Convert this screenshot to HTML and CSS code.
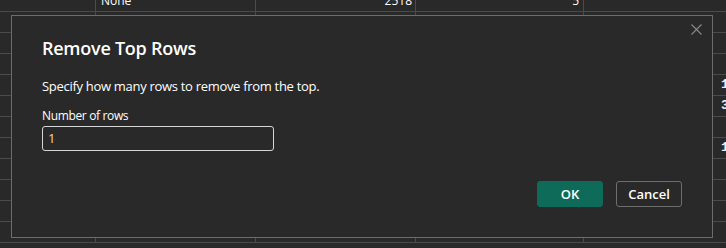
FILE: index.html
```html
<!DOCTYPE html>
<html>
<head>
<meta charset="utf-8">
<link rel="stylesheet" href="styles.css">
</head>
<body>
<div class="sheet">
  <div class="row"><div class="c c1"></div><div class="c c2">None</div><div class="c c3 r">2518</div><div class="c c4 r">5</div><div class="c c5"></div><div class="c c6"></div></div>
  <div class="row"><div class="c c1"></div><div class="c c2"></div><div class="c c3"></div><div class="c c4"></div><div class="c c5"></div><div class="c c6"></div></div>
  <div class="row"><div class="c c1"></div><div class="c c2"></div><div class="c c3"></div><div class="c c4"></div><div class="c c5"></div><div class="c c6"></div></div>
  <div class="row"><div class="c c1"></div><div class="c c2"></div><div class="c c3"></div><div class="c c4"></div><div class="c c5"></div><div class="c c6"></div></div>
  <div class="row"><div class="c c1"></div><div class="c c2"></div><div class="c c3"></div><div class="c c4"></div><div class="c c5"></div><div class="c c6 mono">1</div></div>
  <div class="row"><div class="c c1"></div><div class="c c2"></div><div class="c c3"></div><div class="c c4"></div><div class="c c5"></div><div class="c c6 mono">3</div></div>
  <div class="row"><div class="c c1"></div><div class="c c2"></div><div class="c c3"></div><div class="c c4"></div><div class="c c5"></div><div class="c c6"></div></div>
  <div class="row"><div class="c c1"></div><div class="c c2"></div><div class="c c3"></div><div class="c c4"></div><div class="c c5"></div><div class="c c6 mono">1</div></div>
  <div class="row"><div class="c c1"></div><div class="c c2"></div><div class="c c3"></div><div class="c c4"></div><div class="c c5"></div><div class="c c6"></div></div>
  <div class="row"><div class="c c1"></div><div class="c c2"></div><div class="c c3"></div><div class="c c4"></div><div class="c c5"></div><div class="c c6"></div></div>
  <div class="row"><div class="c c1"></div><div class="c c2"></div><div class="c c3"></div><div class="c c4"></div><div class="c c5"></div><div class="c c6"></div></div>
  <div class="row"><div class="c c1"></div><div class="c c2"></div><div class="c c3"></div><div class="c c4"></div><div class="c c5"></div><div class="c c6"></div></div>
</div>

<div class="dialog">
  <button class="close" aria-label="Close">
    <svg width="11" height="11" viewBox="0 0 11 11"><path d="M0.5 0.5L10.5 10.5M10.5 0.5L0.5 10.5" stroke="#8a8a8a" stroke-width="1.1" fill="none"/></svg>
  </button>
  <h1 class="title">Remove Top Rows</h1>
  <p class="desc">Specify how many rows to remove from the top.</p>
  <label class="label">Number of rows</label>
  <div class="input">1</div>
  <div class="actions">
    <button class="btn ok">OK</button>
    <button class="btn cancel">Cancel</button>
  </div>
</div>
</body>
</html>
```
FILE: styles.css
```css
html, body {
  margin: 0;
  padding: 0;
  background: #292929;
  overflow: hidden;
  width: 726px;
  height: 248px;
}
body {
  position: relative;
  font-family: "Open Sans", "Noto Sans", sans-serif;
  color: #ffffff;
}
.sheet {
  margin-top: -9px;
  display: flex;
  flex-direction: column;
}
.row {
  display: flex;
  height: 21px;
  box-sizing: border-box;
  border-bottom: 1px solid #4b4b4b;
}
.c {
  box-sizing: border-box;
  border-right: 1px solid #4b4b4b;
  font-size: 12px;
  line-height: 20px;
  white-space: nowrap;
  overflow: hidden;
}
.c1 { width: 96px; }
.c2 { width: 160px; padding-left: 5px; }
.c3 { width: 160px; padding-right: 3px; }
.c4 { width: 168px; padding-right: 4px; }
.c5 { width: 134px; border-right-color: transparent; }
.c6 { flex: 1; border-right: none; padding-left: 3px; }
.r { text-align: right; }
.mono {
  font-family: "Liberation Mono", monospace;
  font-weight: bold;
  color: #e8eeff;
  font-size: 13px;
}

.dialog {
  position: absolute;
  left: 11px;
  top: 15px;
  width: 702px;
  height: 223px;
  box-sizing: border-box;
  border: 1px solid #6c6c6c;
  background: #292929;
  padding: 20px 30px 30px 30px;
  display: flex;
  flex-direction: column;
  align-items: flex-start;
}
.close {
  position: absolute;
  top: 8px;
  right: 10px;
  width: 11px;
  height: 11px;
  padding: 0;
  border: none;
  background: none;
  display: flex;
}
.title {
  margin: 0;
  font-size: 18px;
  line-height: 24px;
  font-weight: 600;
  letter-spacing: -0.25px;
}
.desc {
  margin: 17px 0 0 0;
  font-size: 13px;
  line-height: 18px;
  letter-spacing: -0.3px;
}
.label {
  margin-top: 12px;
  font-size: 12px;
  line-height: 18px;
  letter-spacing: -0.35px;
}
.input {
  margin-top: 1px;
  width: 232px;
  height: 25px;
  box-sizing: border-box;
  border: 1px solid #d6d6d6;
  border-radius: 3px;
  padding-left: 5px;
  font-size: 13px;
  line-height: 23px;
  color: #f5d98e;
}
.actions {
  margin-top: auto;
  align-self: flex-end;
  display: flex;
  gap: 13px;
}
.btn {
  width: 66px;
  height: 26px;
  box-sizing: border-box;
  border-radius: 3px;
  font-family: "Open Sans", "Noto Sans", sans-serif;
  font-size: 13px;
  font-weight: 600;
  color: #ffffff;
  padding: 0;
}
.ok {
  background: #0e6b59;
  border: 1px solid #0e6b59;
}
.cancel {
  background: #292929;
  border: 1px solid #6e6e6e;
}
```
